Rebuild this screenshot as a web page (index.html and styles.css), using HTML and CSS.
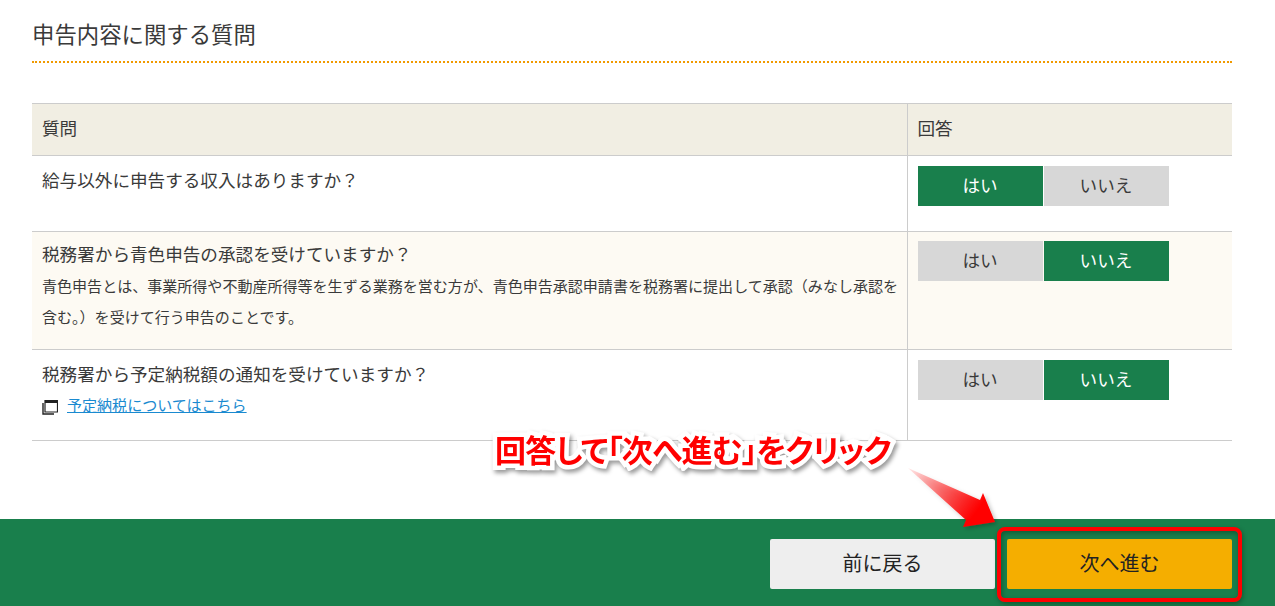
FILE: index.html
```html
<!DOCTYPE html>
<html lang="ja">
<head>
<meta charset="utf-8">
<title>申告内容に関する質問</title>
<link rel="stylesheet" href="styles.css">
</head>
<body>
<main class="content">
  <h2 class="title">申告内容に関する質問</h2>
  <table class="qa">
    <thead>
      <tr class="head"><th class="q">質問</th><th class="a">回答</th></tr>
    </thead>
    <tbody>
      <tr class="r1">
        <td class="q">給与以外に申告する収入はありますか？</td>
        <td class="a"><div class="toggle"><span class="opt on">はい</span><span class="opt">いいえ</span></div></td>
      </tr>
      <tr class="r2">
        <td class="q">税務署から青色申告の承認を受けていますか？
          <p class="note">青色申告とは、事業所得や不動産所得等を生ずる業務を営む方が、青色申告承認申請書を税務署に提出して承認（みなし承認を含む。）を受けて行う申告のことです。</p></td>
        <td class="a"><div class="toggle"><span class="opt">はい</span><span class="opt on">いいえ</span></div></td>
      </tr>
      <tr class="r3">
        <td class="q">税務署から予定納税額の通知を受けていますか？
          <p class="linkline">
            <svg class="win" width="16" height="16" viewBox="0 0 16 16" aria-hidden="true"><path d="M1 4v11h11" fill="none" stroke="#222" stroke-width="1.4"/><path d="M3 1.5h12.5v11.5H3z" fill="#fff" stroke="#222" stroke-width="1.2"/><path d="M3 1h13v3H3z" fill="#222"/></svg>
            <a href="#">予定納税についてはこちら</a></p></td>
        <td class="a"><div class="toggle"><span class="opt">はい</span><span class="opt on">いいえ</span></div></td>
      </tr>
    </tbody>
  </table>
</main>
<footer class="bar">
  <a class="btn back" href="#">前に戻る</a>
  <a class="btn next" href="#">次へ進む</a>
</footer>
<div class="callout">回答して「次へ進む」をクリック</div>
<svg class="arrow" width="100" height="70" viewBox="0 0 100 70" aria-hidden="true">
  <defs>
    <linearGradient id="ag" gradientUnits="userSpaceOnUse" x1="6" y1="3" x2="72" y2="50"><stop offset="0" stop-color="#f00" stop-opacity=".08"/><stop offset="1" stop-color="#f00"/></linearGradient>
    <filter id="as" x="-20%" y="-20%" width="150%" height="150%"><feDropShadow dx="2" dy="2" stdDeviation="2" flood-color="#000" flood-opacity=".25"/></filter>
  </defs>
  <path d="M6 3 L78 35 L81 28 L93 57 L61 62 L64 55 Z" fill="url(#ag)" filter="url(#as)"/>
</svg>
<div class="ring"></div>
</body>
</html>
```
FILE: styles.css
```css
* { box-sizing: border-box; }
html, body { margin: 0; padding: 0; }
body {
  width: 1275px;
  height: 606px;
  overflow: hidden;
  position: relative;
  background: #fff;
  color: #3a3a3a;
  font-family: "Noto Sans CJK JP", "Noto Sans", sans-serif;
  font-weight: 400;
}
.content { height: 519px; padding: 0 43px 0 32px; }
.title {
  margin: 0 0 40px;
  height: 63px;
  padding: 18px 0 0;
  font-size: 22.4px;
  font-weight: 400;
  line-height: 30px;
  border-bottom: 2px dotted #f09a00;
}
.qa { width: 1200px; border-collapse: collapse; table-layout: fixed; font-size: 17.6px; }
.qa th, .qa td { padding: 0 10px; border-top: 1px solid #ccc; border-bottom: 1px solid #ccc; text-align: left; font-weight: 400; vertical-align: top; }
.qa .a { border-left: 1px solid #ccc; width: 325px; }
.qa thead th { background: #f1eee3; height: 52px; vertical-align: middle; padding-bottom: 4px; }
.qa td.q { padding-top: 10px; padding-right: 6px; line-height: 28px; }
.qa td.a { padding-top: 10px; }
.r1 td { height: 76px; }
.r2 td { height: 118px; background: #fdfaf3; }
.qa .r2 td.q { padding-top: 8px; }
.qa .r2 td.a { padding-top: 9px; }
.r3 td { height: 91px; }
.note { margin: 2px 0 0; font-size: 15.04px; line-height: 31px; }
.linkline { margin: 3px 0 0; font-size: 15.04px; line-height: 28px; display: flex; align-items: center; gap: 9px; }
.linkline a { color: #1a8ad0; text-decoration: underline; }
.win { flex: none; margin-top: 4px; }
.toggle { display: flex; gap: 1px; }
.opt {
  width: 125px; height: 40px;
  padding-bottom: 4px;
  display: flex; align-items: center; justify-content: center;
  background: #d7d7d7; color: #3a3a3a;
}
.opt.on { background: #197f4c; color: #fff; }
.bar {
  height: 87px;
  background: #197f4c;
  display: flex;
  justify-content: flex-end;
  gap: 12px;
  padding: 20px 43px 0 0;
}
.btn {
  width: 225px; height: 50px;
  padding-bottom: 3px;
  display: flex; align-items: center; justify-content: center;
  border-radius: 2px;
  font-size: 20px;
  color: #222;
  text-decoration: none;
}
.back { background: #eee; }
.next { background: #f5ae00; }
.callout {
  position: absolute;
  left: 495px; top: 428px;
  font-size: 31px;
  line-height: 42px;
  font-weight: 700;
  font-feature-settings: "palt";
  letter-spacing: -.8px;
  white-space: nowrap;
  color: #f00;
  -webkit-text-stroke: 9px #fff;
  paint-order: stroke fill;
  filter: drop-shadow(2px 3px 2px rgba(0,0,0,.4));
}
.arrow { position: absolute; left: 902px; top: 465px; }
.ring {
  position: absolute;
  left: 997px; top: 527px;
  width: 245px; height: 75px;
  border: 4px solid #f00;
  border-radius: 8px;
  box-shadow: 1px 2px 5px rgba(0,0,0,.3), inset 1px 2px 5px rgba(0,0,0,.3);
}
```
